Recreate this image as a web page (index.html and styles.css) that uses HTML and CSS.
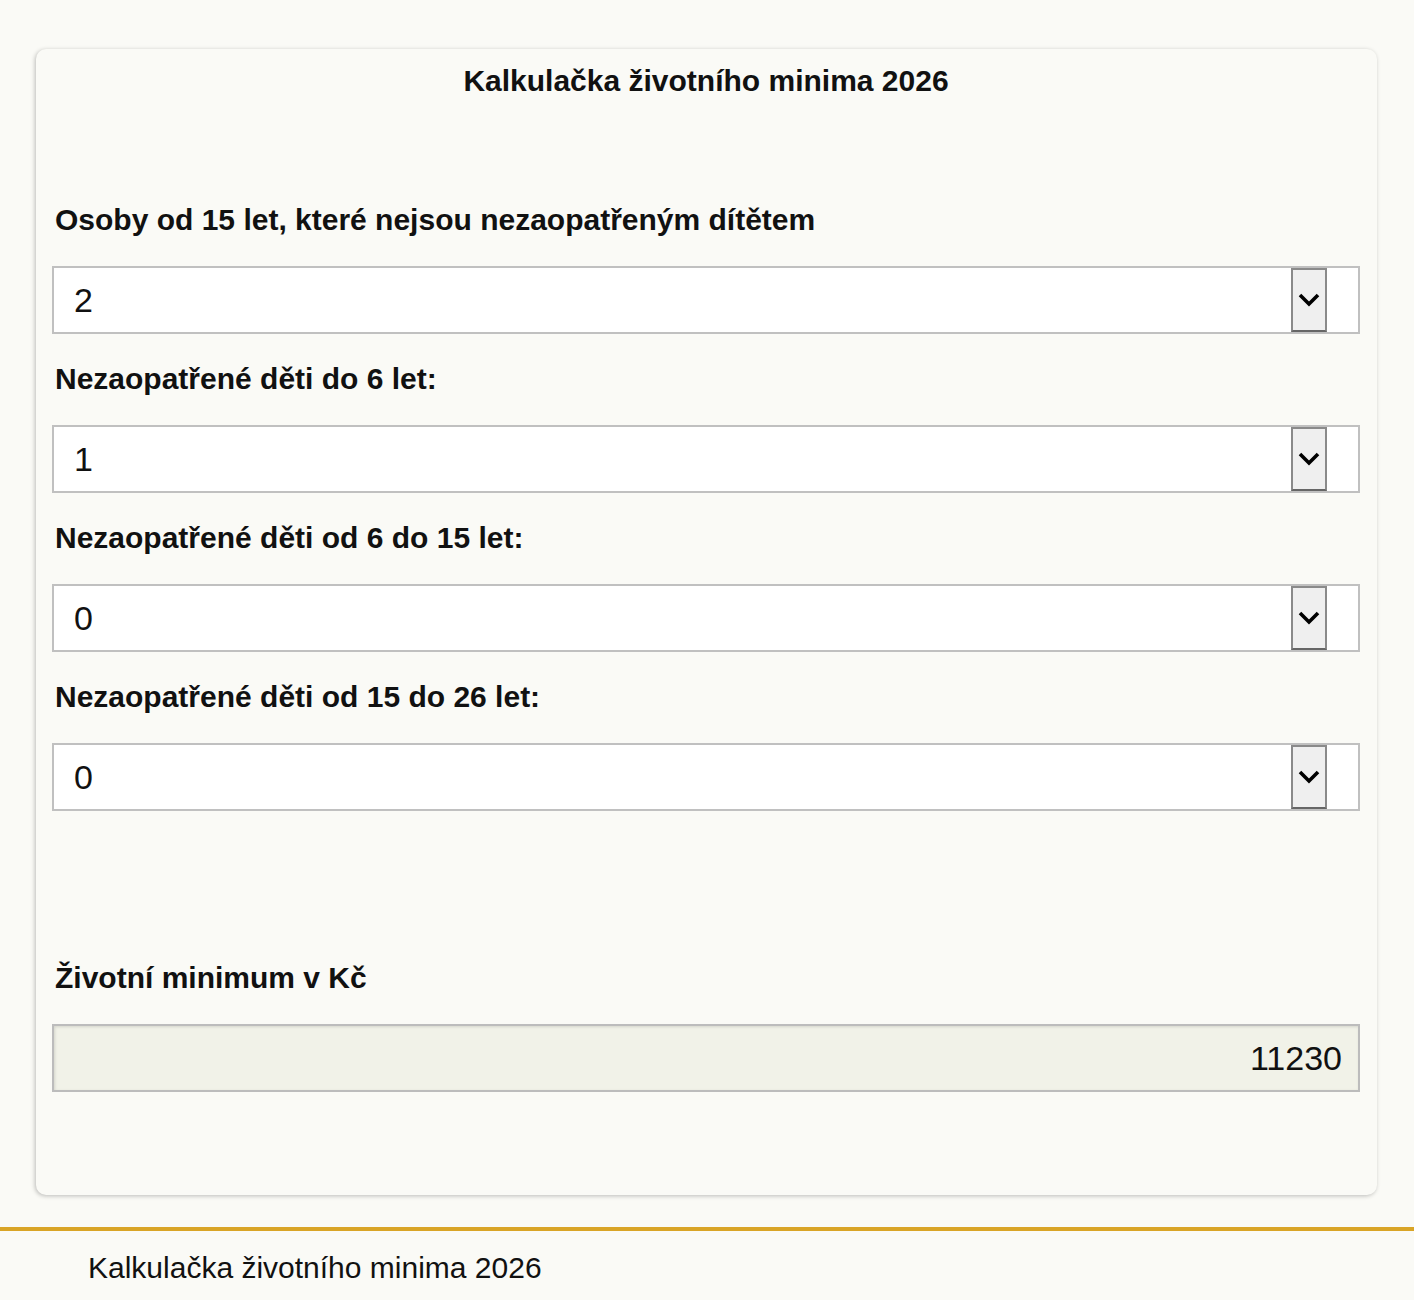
FILE: index.html
```html
<!DOCTYPE html>
<html lang="cs">
<head>
    <meta charset="UTF-8">
    <meta name="viewport" content="width=device-width, initial-scale=1.0">
    <title>Kalkulačka životního minima 2026</title>
    <link rel="stylesheet" href="styles.css">
</head>
<body>
    <div class="card">
        <h1 class="card-title">Kalkulačka životního minima 2026</h1>

        <label class="field-label">Osoby od 15 let, které nejsou nezaopatřeným dítětem</label>
        <div class="select">
            <span class="select-value">2</span>
            <span class="select-button">
                <svg width="22" height="16" viewBox="0 0 22 16"><polyline points="2,3 11,12 20,3" fill="none" stroke="#000" stroke-width="3.6"/></svg>
            </span>
        </div>

        <label class="field-label">Nezaopatřené děti do 6 let:</label>
        <div class="select">
            <span class="select-value">1</span>
            <span class="select-button">
                <svg width="22" height="16" viewBox="0 0 22 16"><polyline points="2,3 11,12 20,3" fill="none" stroke="#000" stroke-width="3.6"/></svg>
            </span>
        </div>

        <label class="field-label">Nezaopatřené děti od 6 do 15 let:</label>
        <div class="select">
            <span class="select-value">0</span>
            <span class="select-button">
                <svg width="22" height="16" viewBox="0 0 22 16"><polyline points="2,3 11,12 20,3" fill="none" stroke="#000" stroke-width="3.6"/></svg>
            </span>
        </div>

        <label class="field-label">Nezaopatřené děti od 15 do 26 let:</label>
        <div class="select">
            <span class="select-value">0</span>
            <span class="select-button">
                <svg width="22" height="16" viewBox="0 0 22 16"><polyline points="2,3 11,12 20,3" fill="none" stroke="#000" stroke-width="3.6"/></svg>
            </span>
        </div>

        <label class="field-label result-label">Životní minimum v Kč</label>
        <div class="result">11230</div>
    </div>

    <footer class="footer">
        Kalkulačka životního minima 2026
    </footer>
</body>
</html>
```

FILE: styles.css
```css
body, html {
    margin: 0;
    padding: 0;
    background-color: #fafaf6;
    font-family: 'Liberation Sans', Arial, sans-serif;
    color: #111;
}

.card {
    margin: 49px 37px 0 36px;
    padding: 15px 17px 103px 16px;
    border-radius: 10px;
    background-color: #fafaf6;
    box-shadow: -1px 1px 4px rgba(0, 0, 0, 0.25);
}

.card-title {
    margin: 0 0 106px 0;
    text-align: center;
    font-size: 30px;
    line-height: 34px;
    font-weight: bold;
}

.field-label {
    display: block;
    margin: 29px 0 30px 3px;
    font-size: 30px;
    line-height: 32px;
    font-weight: bold;
}

.card-title + .field-label {
    margin-top: 0;
}

.select {
    display: flex;
    align-items: center;
    height: 64px;
    border: 2px solid #c0c0c0;
    background-color: #fff;
}

.select-value {
    flex: 1;
    padding-left: 20px;
    font-size: 34px;
}

.select-button {
    display: flex;
    align-items: center;
    justify-content: center;
    width: 32px;
    height: 60px;
    margin-right: 31px;
    border: 2px solid #8a8a8a;
    border-bottom-color: #666;
    background-color: #efefef;
}

.result-label {
    margin-top: 151px;
}

.result {
    height: 64px;
    line-height: 64px;
    padding-right: 16px;
    border: 2px solid #bcbcbc;
    background-color: #f1f2e8;
    box-shadow: inset 1px 1px 3px rgba(0, 0, 0, 0.12);
    text-align: right;
    font-size: 34px;
}

.footer {
    margin-top: 32px;
    border-top: 4px solid #d9a426;
    padding: 20px 88px;
    font-size: 30px;
    line-height: 34px;
}
```
